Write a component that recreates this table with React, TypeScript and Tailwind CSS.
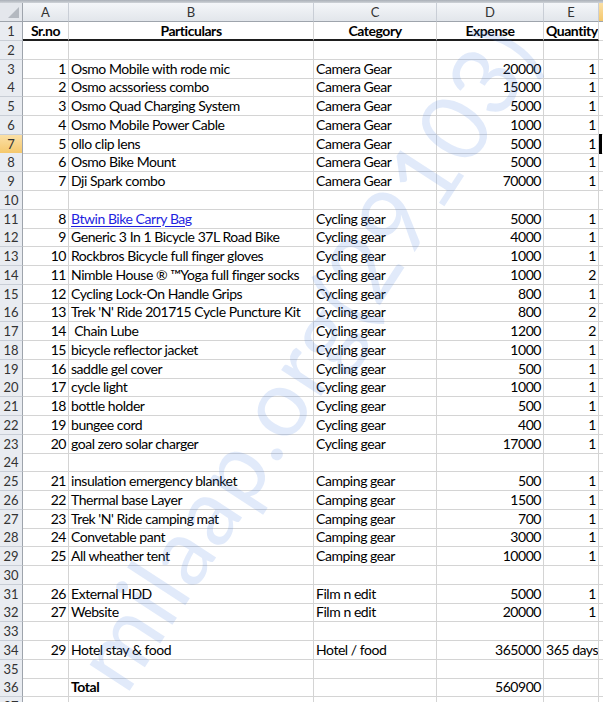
import React from "react";

type Row = {
  a?: string;
  b?: string;
  c?: string;
  d?: string;
  e?: string;
  link?: boolean;
  bold?: boolean;
  header?: boolean;
};

const rows: Row[] = [
  { a: "Sr.no", b: "Particulars", c: "Category", d: "Expense", e: "Quantity", header: true },
  {},
  { a: "1", b: "Osmo Mobile with rode mic", c: "Camera Gear", d: "20000", e: "1" },
  { a: "2", b: "Osmo acssoriess combo", c: "Camera Gear", d: "15000", e: "1" },
  { a: "3", b: "Osmo Quad Charging System", c: "Camera Gear", d: "5000", e: "1" },
  { a: "4", b: "Osmo Mobile Power Cable", c: "Camera Gear", d: "1000", e: "1" },
  { a: "5", b: "ollo clip lens", c: "Camera Gear", d: "5000", e: "1" },
  { a: "6", b: "Osmo Bike Mount", c: "Camera Gear", d: "5000", e: "1" },
  { a: "7", b: "Dji Spark combo", c: "Camera Gear", d: "70000", e: "1" },
  {},
  { a: "8", b: "Btwin Bike Carry Bag", c: "Cycling gear", d: "5000", e: "1", link: true },
  { a: "9", b: "Generic 3 In 1 Bicycle 37L Road Bike", c: "Cycling gear", d: "4000", e: "1" },
  { a: "10", b: "Rockbros Bicycle full finger gloves", c: "Cycling gear", d: "1000", e: "1" },
  { a: "11", b: "Nimble House \u00AE \u2122Yoga full finger socks", c: "Cycling gear", d: "1000", e: "2" },
  { a: "12", b: "Cycling Lock-On Handle Grips", c: "Cycling gear", d: "800", e: "1" },
  { a: "13", b: "Trek 'N' Ride 201715 Cycle Puncture Kit", c: "Cycling gear", d: "800", e: "2" },
  { a: "14", b: "\u00A0Chain Lube", c: "Cycling gear", d: "1200", e: "2" },
  { a: "15", b: "bicycle reflector jacket", c: "Cycling gear", d: "1000", e: "1" },
  { a: "16", b: "saddle gel cover", c: "Cycling gear", d: "500", e: "1" },
  { a: "17", b: "cycle light", c: "Cycling gear", d: "1000", e: "1" },
  { a: "18", b: "bottle holder", c: "Cycling gear", d: "500", e: "1" },
  { a: "19", b: "bungee cord", c: "Cycling gear", d: "400", e: "1" },
  { a: "20", b: "goal zero solar charger", c: "Cycling gear", d: "17000", e: "1" },
  {},
  { a: "21", b: "insulation emergency blanket", c: "Camping gear", d: "500", e: "1" },
  { a: "22", b: "Thermal base Layer", c: "Camping gear", d: "1500", e: "1" },
  { a: "23", b: "Trek 'N' Ride camping mat", c: "Camping gear", d: "700", e: "1" },
  { a: "24", b: "Convetable pant", c: "Camping gear", d: "3000", e: "1" },
  { a: "25", b: "All wheather tent", c: "Camping gear", d: "10000", e: "1" },
  {},
  { a: "26", b: "External HDD", c: "Film n edit", d: "5000", e: "1" },
  { a: "27", b: "Website", c: "Film n edit", d: "20000", e: "1" },
  {},
  { a: "29", b: "Hotel stay & food", c: "Hotel / food", d: "365000", e: "365 days" },
  {},
  { b: "Total", d: "560900", bold: true },
  {},
];

const grid = "grid grid-cols-[23px_46px_245px_123px_107px_55px_1fr]";
const cell = "border-r border-b border-[#d4d4d4] overflow-hidden whitespace-nowrap px-[2px] tracking-[-0.45px]";

function SheetRow({ r, i }: { r: Row; i: number }) {
  const num = i + 1;
  const selected = num === 7;
  const hb = r.header ? "border-b-2 border-b-[#1e1e1e]" : "";
  return (
    <div className={`${grid} h-[18.75px] leading-[17px]`}>
      <div
        className={`border-r border-b border-r-[#9ea4ac] border-b-[#c9ced6] text-center text-[13px] text-[#333] leading-[18px] ${
          selected ? "bg-gradient-to-b from-[#fbe0a6] to-[#f5c86c]" : "bg-[#e9ecf1]"
        }`}
      >
        {num}
      </div>
      <div className={`${cell} ${hb} ${r.header ? "text-center font-bold" : "text-right"}`}>{r.a}</div>
      <div
        className={`${cell} ${hb} ${r.header ? "text-center font-bold" : "text-left"} ${
          r.bold ? "font-bold" : ""
        } ${r.link ? "text-[#1f1fe0] underline underline-offset-2" : ""}`}
      >
        {r.b}
      </div>
      <div className={`${cell} ${hb} ${r.header ? "text-center font-bold" : "text-left"}`}>{r.c}</div>
      <div className={`${cell} ${hb} ${r.header ? "text-center font-bold" : "text-right"}`}>{r.d}</div>
      <div className={`${cell} ${hb} ${r.header ? "text-center font-bold" : "text-right"} relative`}>{r.e}</div>
      <div className={`border-b border-[#d4d4d4] relative`}>
        {selected && <div className="absolute left-0 -top-px -bottom-px w-[3px] bg-black" />}
      </div>
    </div>
  );
}

export default function App() {
  return (
    <div
      className="relative w-[603px] h-[702px] overflow-hidden bg-white text-[14px] text-black"
      style={{ fontFamily: "Lato, 'Liberation Sans', sans-serif" }}
    >
      <div className="h-[3px] bg-gradient-to-b from-[#a9afb7] to-[#cfd3d8]" />
      <div className={`${grid} h-[19px] leading-[18px] text-[13px] text-[#333]`}>
        <div className="relative border-r border-b border-r-[#9ea4ac] border-b-[#9ea4ac] bg-[#e4e7ec]">
          <svg className="absolute right-[3px] bottom-[3px]" width="11" height="11" viewBox="0 0 11 11">
            <polygon points="11,0 11,11 0,11" fill="#b4b9c0" />
          </svg>
        </div>
        {["A", "B", "C", "D", "E"].map((l) => (
          <div
            key={l}
            className="border-r border-b border-r-[#c9ced6] border-b-[#9ea4ac] bg-gradient-to-b from-[#f4f6f9] to-[#e2e6eb] text-center"
          >
            {l}
          </div>
        ))}
        <div className="border-b border-b-[#9ea4ac] bg-gradient-to-b from-[#fbe0a6] to-[#f5c86c]" />
      </div>
      {rows.map((r, i) => (
        <SheetRow key={i} r={r} i={i} />
      ))}
      <div className="pointer-events-none absolute left-0 top-0 w-[603px] h-[702px] flex items-center justify-center">
        <div
          className="whitespace-nowrap text-[94px] font-normal tracking-[1px] text-[rgba(80,130,225,0.17)] rotate-[-57deg] translate-x-[2px] translate-y-[4px]"
          style={{ fontFamily: "Lato, 'Liberation Sans', sans-serif" }}
        >
          milaap.org(29103)
        </div>
      </div>
    </div>
  );
}
